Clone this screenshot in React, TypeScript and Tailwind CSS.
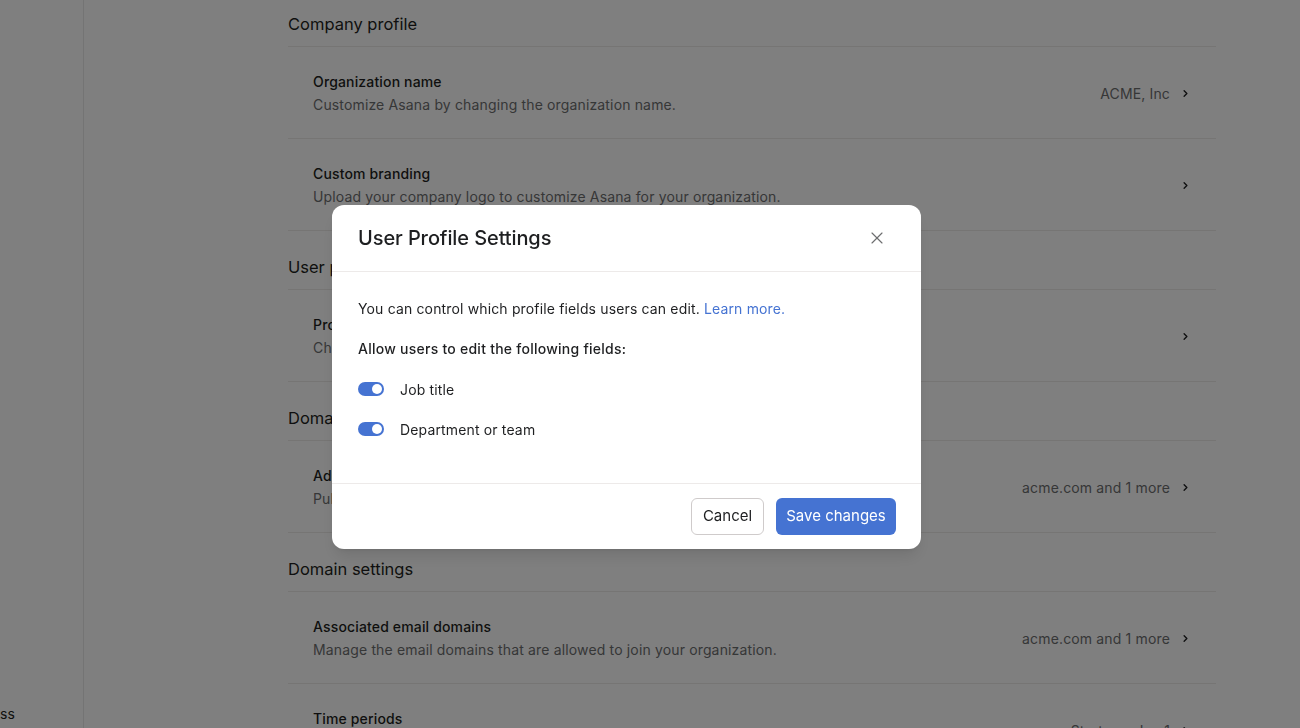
import React from 'react';
import { ChevronRight, X } from 'lucide-react';

interface Row {
  title: string;
  description: string;
  value?: string;
}

interface Section {
  heading: string;
  rows: Row[];
}

const sections: Section[] = [
  {
    heading: 'Company profile',
    rows: [
      {
        title: 'Organization name',
        description: 'Customize Asana by changing the organization name.',
        value: 'ACME, Inc',
      },
      {
        title: 'Custom branding',
        description: 'Upload your company logo to customize Asana for your organization.',
      },
    ],
  },
  {
    heading: 'User profile settings',
    rows: [
      {
        title: 'Profile fields',
        description: 'Choose which profile fields members of your organization can edit.',
      },
    ],
  },
  {
    heading: 'Domains',
    rows: [
      {
        title: 'Additional domains',
        description: 'Public domains that members can use to sign in.',
        value: 'acme.com and 1 more',
      },
    ],
  },
  {
    heading: 'Domain settings',
    rows: [
      {
        title: 'Associated email domains',
        description: 'Manage the email domains that are allowed to join your organization.',
        value: 'acme.com and 1 more',
      },
      {
        title: 'Time periods',
        description: 'Set the start of your fiscal year for goals and reporting.',
        value: 'Starts on Jan 1',
      },
    ],
  },
];

const Toggle: React.FC<{ label: string }> = ({ label }) => (
  <div className="flex items-center h-[24px]">
    <div className="w-[26px] h-[14px] rounded-full bg-[#4573d2] flex items-center justify-end pr-[2px]">
      <div className="w-[10px] h-[10px] rounded-full bg-white" />
    </div>
    <span className="ml-[16px] text-[14px] tracking-[0.15px] text-[#1e1f21]">{label}</span>
  </div>
);

export default function App() {
  return (
    <div
      className="relative h-screen w-full overflow-hidden bg-white flex"
      style={{ fontFamily: 'Inter, "Liberation Sans", sans-serif' }}
    >
      {/* Sidebar */}
      <div className="w-[84px] shrink-0 border-r border-[#e8e8e8] flex flex-col justify-end pb-[4px] overflow-hidden">
        <span className="text-[14px] leading-[20px] text-[#1e1f21]">ss</span>
      </div>

      {/* Main */}
      <div className="flex-1 pl-[204px]">
        <div className="w-[928px]">
          {sections.map((section, i) => (
            <div key={section.heading}>
              <div
                className={`${i === 0 ? 'pt-[12px]' : 'pt-[24px]'} pb-[10px] border-b border-[#edeae9] text-[16.5px] leading-[24px] text-[#1e1f21]`}
              >
                {section.heading}
              </div>
              {section.rows.map((row) => (
                <div
                  key={row.title}
                  className="flex items-center justify-between pl-[25px] pr-[25px] pt-[25px] pb-[23px] border-b border-[#edeae9]"
                >
                  <div className="flex flex-col gap-[3px] tracking-[0.15px]">
                    <span className="text-[14px] leading-[20px] font-medium text-[#1e1f21]">{row.title}</span>
                    <span className="text-[14px] leading-[20px] text-[#6d6e6f]">{row.description}</span>
                  </div>
                  <div className="flex items-center gap-[10px] text-[14px] tracking-[0.15px] text-[#6d6e6f]">
                    {row.value && <span>{row.value}</span>}
                    <ChevronRight className="w-[11px] h-[11px] text-[#1e1f21]" strokeWidth={3} />
                  </div>
                </div>
              ))}
            </div>
          ))}
        </div>
      </div>

      {/* Overlay */}
      <div className="fixed inset-0 bg-black/50" />

      {/* Modal */}
      <div className="fixed left-[332px] top-[205px] w-[589px] bg-white rounded-[12px] shadow-lg">
        <div className="h-[67px] pl-[26px] pr-[34px] flex items-center justify-between border-b border-[#edeae9]">
          <h2 className="text-[20px] font-medium text-[#1e1f21] tracking-[-0.1px]">User Profile Settings</h2>
          <X className="w-[20px] h-[20px] text-[#6d6e6f]" strokeWidth={1.4} />
        </div>
        <div className="pl-[26px] pr-[25px] pt-[25px] pb-[42px] flex flex-col gap-[16px]">
          <p className="text-[14px] leading-[24px] tracking-[0.15px] text-[#1e1f21]">
            You can control which profile fields users can edit.{' '}
            <span className="text-[#4573d2]">Learn more.</span>
          </p>
          <p className="text-[14px] leading-[24px] tracking-[0.25px] font-medium text-[#1e1f21]">
            Allow users to edit the following fields:
          </p>
          <Toggle label="Job title" />
          <Toggle label="Department or team" />
        </div>
        <div className="h-[66px] px-[25px] flex items-center justify-end gap-[12px] border-t border-[#edeae9]">
          <button className="h-[37px] w-[73px] rounded-[6px] border border-[#cfcbcb] text-[15px] text-[#1e1f21] bg-white">
            Cancel
          </button>
          <button className="h-[37px] w-[120px] rounded-[6px] bg-[#4573d2] text-[15px] text-white">
            Save changes
          </button>
        </div>
      </div>
    </div>
  );
}
